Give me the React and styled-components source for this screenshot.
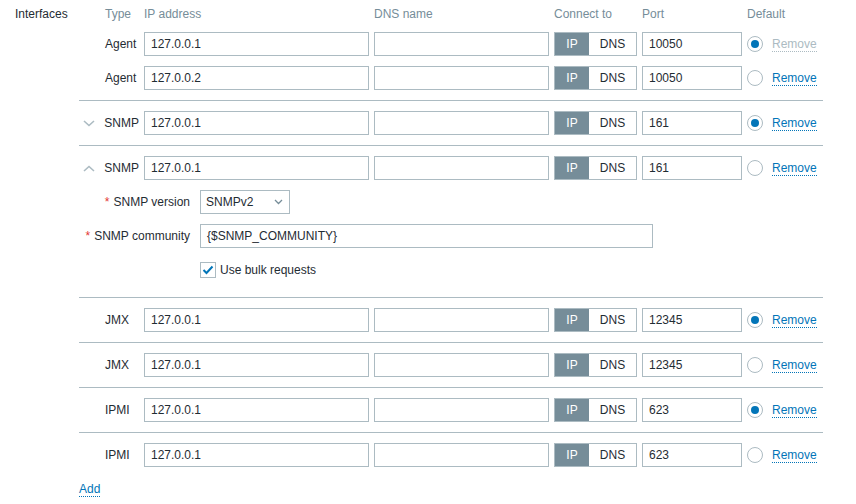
import React from 'react';
import styled, { createGlobalStyle } from 'styled-components';

const GlobalStyle = createGlobalStyle`
  body {
    margin: 0;
    background: #fff;
    font-family: "Liberation Sans", Arial, sans-serif;
    font-size: 12px;
    color: #1f2c33;
  }
`;

const Page = styled.div`
  display: flex;
  padding-top: 4px;
`;

const FormLabel = styled.div`
  width: 79px;
  flex-shrink: 0;
  padding-left: 15px;
  box-sizing: border-box;
  line-height: 20px;
`;

const Table = styled.div`
  width: 744px;
  flex-shrink: 0;
`;

const Grid = styled.div`
  display: grid;
  grid-template-columns: 60px 225px 175px 83px 100px 16px auto;
  column-gap: 5px;
  align-items: center;
`;

const Header = styled(Grid)`
  height: 20px;
  color: #768d99;
  line-height: 20px;
`;

const HeadCell = styled.div`
  white-space: nowrap;
  padding-left: ${({ $indent }) => $indent || 0}px;
  grid-column: ${({ $span }) => ($span ? `span ${$span}` : 'auto')};
`;

const Group = styled.div`
  display: flex;
  flex-direction: column;
  gap: 10px;
  padding: ${({ $first }) => ($first ? '8px 0 10px' : '10px 0')};
  border-top: ${({ $first }) => ($first ? 'none' : '1px solid #acbbc2')};
`;

const TypeCell = styled.div`
  display: flex;
  align-items: center;
  height: 24px;
`;

const ChevronSlot = styled.div`
  width: 26px;
  padding-left: 4px;
  box-sizing: border-box;
  display: flex;
  align-items: center;
`;

const Input = styled.div`
  height: 24px;
  box-sizing: border-box;
  border: 1px solid #acbbc2;
  padding: 0 6px;
  line-height: 22px;
  width: ${({ $w }) => ($w ? `${$w}px` : 'auto')};
  white-space: nowrap;
  overflow: hidden;
`;

const Segmented = styled.div`
  display: flex;
  height: 24px;
  box-sizing: border-box;
  border: 1px solid #acbbc2;
`;

const Segment = styled.div`
  width: ${({ $w }) => $w}px;
  text-align: center;
  line-height: 22px;
  background: ${({ $active }) => ($active ? '#768d99' : '#fff')};
  color: ${({ $active }) => ($active ? '#fff' : '#1f2c33')};
`;

const Radio = styled.span`
  display: block;
  position: relative;
  width: 16px;
  height: 16px;
  box-sizing: border-box;
  border: 1px solid #acbbc2;
  border-radius: 50%;
  &::after {
    content: '';
    display: ${({ $checked }) => ($checked ? 'block' : 'none')};
    position: absolute;
    left: 3px;
    top: 3px;
    width: 8px;
    height: 8px;
    border-radius: 50%;
    background: #0275b8;
  }
`;

const LinkText = styled.span`
  color: ${({ $disabled }) => ($disabled ? '#acbbc2' : '#0275b8')};
  border-bottom: 1px dotted ${({ $disabled }) => ($disabled ? '#acbbc2' : '#0275b8')};
`;

const RemoveCell = styled.div`
  padding-left: 4px;
`;

const SubForm = styled.div`
  display: grid;
  grid-template-columns: 111px auto;
  column-gap: 10px;
  row-gap: 10px;
  align-items: center;
  padding-bottom: 5px;
`;

const SubLabel = styled.div`
  text-align: right;
  white-space: nowrap;
`;

const Asterisk = styled.span`
  color: #e33734;
  margin-right: 4px;
`;

const Select = styled.div`
  width: 90px;
  height: 24px;
  box-sizing: border-box;
  border: 1px solid #acbbc2;
  padding: 0 6px 0 5px;
  display: flex;
  align-items: center;
  justify-content: space-between;
`;

const CheckRow = styled.label`
  display: flex;
  align-items: center;
  gap: 4px;
  height: 24px;
`;

const CheckBox = styled.span`
  width: 16px;
  height: 16px;
  box-sizing: border-box;
  border: 1px solid #acbbc2;
  display: flex;
  align-items: center;
  justify-content: center;
`;

const AddRow = styled.div`
  padding-top: 4px;
  line-height: 16px;
`;

const Chevron = ({ up }) => (
  <svg width="12" height="7" viewBox="0 0 12 7">
    <polyline
      points={up ? '1,6 6,1.5 11,6' : '1,1 6,5.5 11,1'}
      fill="none"
      stroke="#acbbc2"
      strokeWidth="1.6"
    />
  </svg>
);

const InterfaceRow = ({ type, ip, port, checked, chevron, removeDisabled }) => (
  <Grid>
    <TypeCell>
      <ChevronSlot>{chevron && <Chevron up={chevron === 'up'} />}</ChevronSlot>
      {type}
    </TypeCell>
    <Input>{ip}</Input>
    <Input />
    <Segmented>
      <Segment $w={34} $active>IP</Segment>
      <Segment $w={47}>DNS</Segment>
    </Segmented>
    <Input>{port}</Input>
    <Radio $checked={checked} />
    <RemoveCell>
      <LinkText $disabled={removeDisabled}>Remove</LinkText>
    </RemoveCell>
  </Grid>
);

export default function App() {
  return (
    <>
      <GlobalStyle />
      <Page>
        <FormLabel>Interfaces</FormLabel>
        <Table>
          <Header>
            <HeadCell $indent={26}>Type</HeadCell>
            <HeadCell>IP address</HeadCell>
            <HeadCell>DNS name</HeadCell>
            <HeadCell>Connect to</HeadCell>
            <HeadCell>Port</HeadCell>
            <HeadCell $span={2}>Default</HeadCell>
          </Header>
          <Group $first>
            <InterfaceRow type="Agent" ip="127.0.0.1" port="10050" checked removeDisabled />
            <InterfaceRow type="Agent" ip="127.0.0.2" port="10050" />
          </Group>
          <Group>
            <InterfaceRow type="SNMP" ip="127.0.0.1" port="161" checked chevron="down" />
          </Group>
          <Group>
            <InterfaceRow type="SNMP" ip="127.0.0.1" port="161" chevron="up" />
            <SubForm>
              <SubLabel><Asterisk>*</Asterisk>SNMP version</SubLabel>
              <Select>
                <span>SNMPv2</span>
                <svg width="9" height="6" viewBox="0 0 9 6">
                  <polyline points="1,1 4.5,4.5 8,1" fill="none" stroke="#768d99" strokeWidth="1.3" />
                </svg>
              </Select>
              <SubLabel><Asterisk>*</Asterisk>SNMP community</SubLabel>
              <Input $w={453}>{'{$SNMP_COMMUNITY}'}</Input>
              <div />
              <CheckRow>
                <CheckBox>
                  <svg width="12" height="10" viewBox="0 0 12 10">
                    <polyline points="1.5,5 4.5,8 10.5,1.5" fill="none" stroke="#0275b8" strokeWidth="2" />
                  </svg>
                </CheckBox>
                Use bulk requests
              </CheckRow>
            </SubForm>
          </Group>
          <Group>
            <InterfaceRow type="JMX" ip="127.0.0.1" port="12345" checked />
          </Group>
          <Group>
            <InterfaceRow type="JMX" ip="127.0.0.1" port="12345" />
          </Group>
          <Group>
            <InterfaceRow type="IPMI" ip="127.0.0.1" port="623" checked />
          </Group>
          <Group>
            <InterfaceRow type="IPMI" ip="127.0.0.1" port="623" />
          </Group>
          <AddRow>
            <LinkText>Add</LinkText>
          </AddRow>
        </Table>
      </Page>
    </>
  );
}
